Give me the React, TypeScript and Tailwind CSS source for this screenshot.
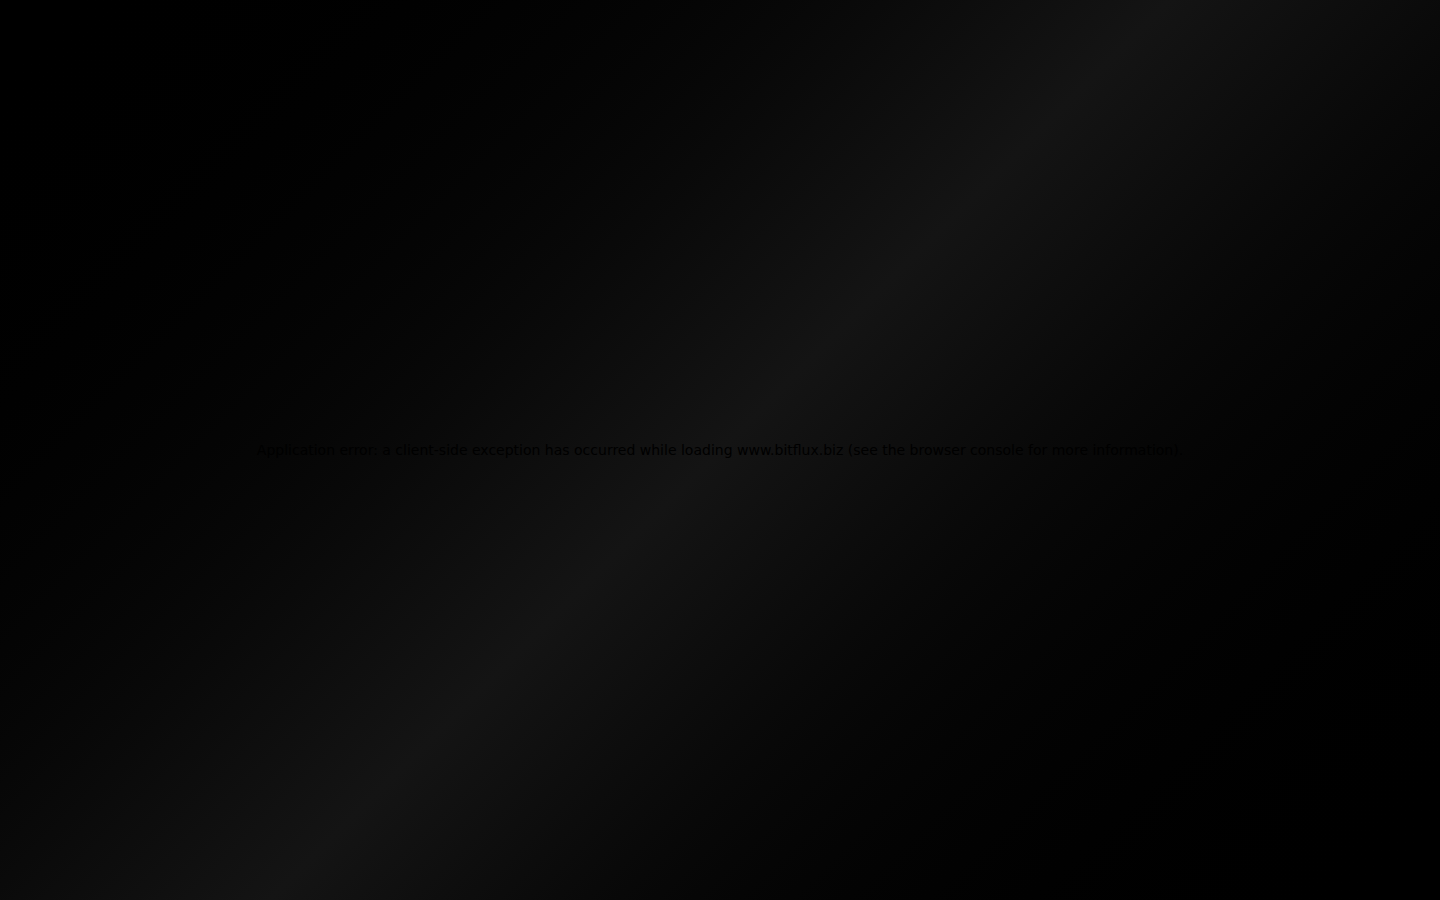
export default function App() {
  return (
    <div className="flex h-screen flex-col items-center justify-center bg-linear-135 from-black via-[#141414] to-black text-center">
      <div>
        <h2 className="mx-2 text-[14px] font-normal leading-[28px] text-black" style={{ fontFamily: '"DejaVu Sans", sans-serif' }}>
          Application error: a client-side exception has occurred while loading www.bitflux.biz (see the browser console for more information).
        </h2>
      </div>
    </div>
  );
}
